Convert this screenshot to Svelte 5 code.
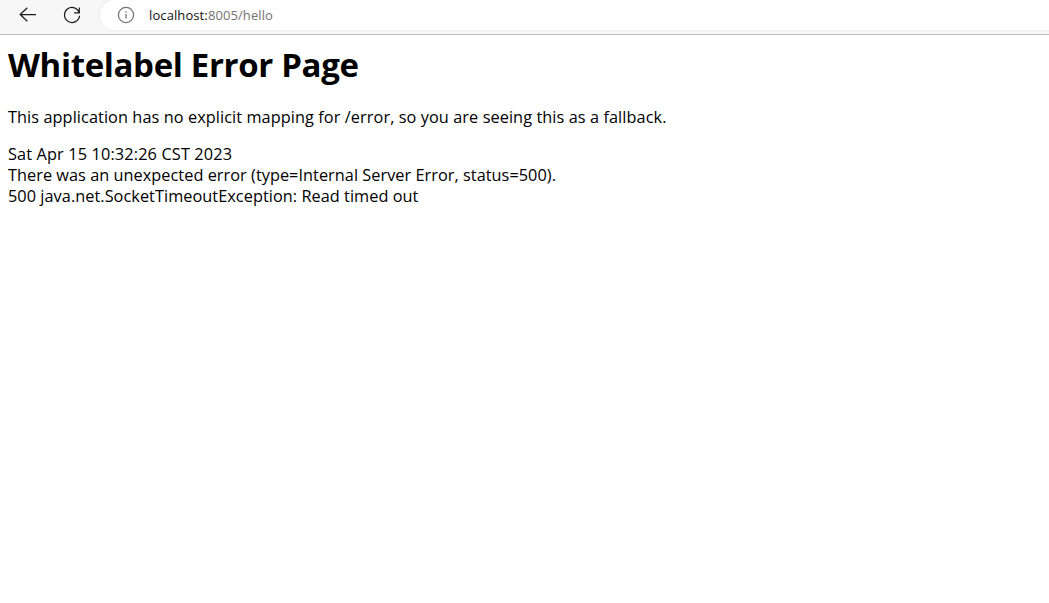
<script>
  const host = 'localhost:';
  const path = '8005/hello';
</script>

<header class="toolbar">
  <button class="back" aria-label="Back">
    <svg width="18" height="16" viewBox="0 0 18 16"><path d="M17 7.5H1.2M8.3 0.7L1.2 7.5l7.1 6.8" /></svg>
  </button>
  <button class="reload" aria-label="Reload">
    <svg width="18" height="18" viewBox="0 0 18 18"><path d="M16.3 7.1A7.5 7.5 0 1 0 16.5 9.7M16.3 1.5v5.3h-5.2" /></svg>
  </button>
  <div class="address">
    <svg width="18" height="18" viewBox="0 0 18 18"><circle cx="9" cy="9" r="7.6" /><path d="M9 8v4.6M9 5.2v1.6" /></svg>
    <span class="url"><span class="host">{host}</span><span class="path">{path}</span></span>
  </div>
</header>
<main>
  <h1>Whitelabel Error Page</h1>
  <p class="intro">This application has no explicit mapping for /error, so you are seeing this as a fallback.</p>
  <div class="date">Sat Apr 15 10:32:26 CST 2023</div>
  <div class="reason">There was an unexpected error (type=Internal Server Error, status=500).</div>
  <div class="detail">500 java.net.SocketTimeoutException: Read timed out</div>
</main>

<style>
  :global(body) {
    margin: 0;
    background: #fff;
    color: #000;
    font-family: 'Open Sans', 'Noto Sans', sans-serif;
  }
  .toolbar {
    box-sizing: border-box;
    height: 35px;
    display: flex;
    align-items: flex-start;
    background: #f7f7f7;
    border-bottom: 1px solid #bcbcbc;
    overflow: hidden;
  }
  button {
    border: 0;
    padding: 0;
    background: none;
    display: flex;
  }
  svg {
    fill: none;
    stroke: #1b1b1b;
    stroke-width: 1.25;
    flex: none;
  }
  .back { margin: 7px 0 0 19px; }
  .reload { margin: 6px 0 0 26px; }
  .address {
    box-sizing: border-box;
    flex: 1;
    height: 30px;
    margin-left: 19px;
    padding-left: 17px;
    display: flex;
    align-items: center;
    gap: 14px;
    border-radius: 15px 0 0 15px;
    background: #fff;
    box-shadow: 0 0 4px #e8e8e8;
  }
  .address svg { stroke: #737373; }
  .url {
    font-size: 13px;
    line-height: 20px;
    letter-spacing: 0.1px;
    white-space: nowrap;
  }
  .host { color: #111; }
  .path { color: #737373; }
  main {
    padding: 8px 8px 0;
    font-size: 16.3px;
    line-height: 21px;
    white-space: nowrap;
  }
  h1 {
    width: max-content;
    margin: 0;
    font-size: 33px;
    line-height: 44px;
    font-weight: 700;
    letter-spacing: -0.34px;
  }
  p { margin: 20px 0 16px; }
  p, main div { width: max-content; }
  .intro { letter-spacing: 0.08px; }
  .date { letter-spacing: 0.14px; }
  .reason { letter-spacing: 0.04px; }
  .detail { letter-spacing: 0.05px; }
</style>
